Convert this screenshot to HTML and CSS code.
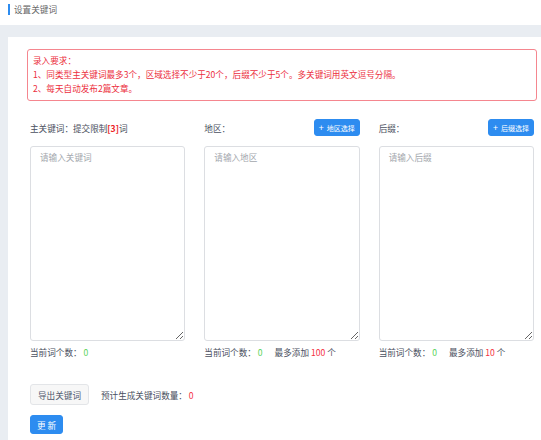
FILE: index.html
```html
<!DOCTYPE html>
<html lang="zh-CN">
<head>
    <meta charset="UTF-8">
    <meta name="viewport" content="width=device-width, initial-scale=1.0">
    <title>设置关键词</title>
    <link rel="stylesheet" href="styles.css">
</head>
<body>
    <div class="page-header">
        <span class="page-title">设置关键词</span>
    </div>

    <div class="card">
        <div class="notice">
            <p>录入要求：</p>
            <p>1、同类型主关键词最多3个，区域选择不少于20个，后缀不少于5个。多关键词用英文逗号分隔。</p>
            <p>2、每天自动发布2篇文章。</p>
        </div>

        <div class="form">
            <div class="columns">
                <div class="col">
                    <div class="col-head">
                        <span class="label">主关键词：提交限制<b class="limit">[3]</b>词</span>
                    </div>
                    <textarea class="input" placeholder="请输入关键词"></textarea>
                    <div class="count">当前词个数： <span class="ok">0</span></div>
                </div>

                <div class="col">
                    <div class="col-head">
                        <span class="label">地区：</span>
                        <button class="btn btn-primary btn-small"><span class="plus">+</span>地区选择</button>
                    </div>
                    <textarea class="input" placeholder="请输入地区"></textarea>
                    <div class="count">当前词个数： <span class="ok">0</span><span class="max">最多添加 <span class="bad">100</span> 个</span></div>
                </div>

                <div class="col">
                    <div class="col-head">
                        <span class="label">后缀：</span>
                        <button class="btn btn-primary btn-small"><span class="plus">+</span>后缀选择</button>
                    </div>
                    <textarea class="input" placeholder="请输入后缀"></textarea>
                    <div class="count">当前词个数： <span class="ok">0</span><span class="max">最多添加 <span class="bad">10</span> 个</span></div>
                </div>
            </div>

            <div class="export-row">
                <button class="btn btn-default">导出关键词</button>
                <span class="estimate">预计生成关键词数量： <span class="bad">0</span></span>
            </div>

            <button class="btn btn-primary btn-update">更 新</button>
        </div>
    </div>
</body>
</html>
```

FILE: styles.css
```css
body {
    margin: 0;
    background: #e9edf2;
    font-family: "Noto Sans CJK SC", "Liberation Sans", sans-serif;
    font-size: 8.6px;
    color: #4a5060;
    height: 440px;
    overflow: hidden;
}

.page-header {
    background: white;
    height: 25px;
    padding: 3px 0 0 8px;
    box-sizing: border-box;
}

.page-title {
    display: inline-block;
    border-left: 2px solid #2d8cf0;
    padding-left: 4px;
    line-height: 11px;
    color: #666;
}

.card {
    background: white;
    margin: 12px 0 0 8px;
    padding: 12px 4px 6px 19px;
}

.notice {
    border: 1.5px solid #f5868f;
    border-radius: 3px;
    padding: 3px 5px 5px;
    color: #ec2f40;
}

.notice p {
    margin: 0;
    line-height: 14px;
}

.form {
    padding: 0 3px;
}

.columns {
    display: grid;
    grid-template-columns: repeat(3, 1fr);
    column-gap: 19px;
    margin-top: 18px;
}

.col-head {
    display: flex;
    justify-content: space-between;
    align-items: center;
    height: 17px;
    margin-bottom: 10px;
}

.limit {
    color: #ed1c24;
}

.input {
    display: block;
    width: 100%;
    height: 195px;
    box-sizing: border-box;
    border: 1px solid #dcdee2;
    border-radius: 3px;
    padding: 4px 9px;
    font-family: inherit;
    font-size: 8.6px;
    line-height: 12px;
    color: #515a6e;
    resize: vertical;
}

.input::placeholder {
    color: #a3a7ad;
}

.count {
    margin-top: 5px;
    line-height: 12px;
}

.ok {
    color: #5ad35a;
}

.bad {
    color: #f5313f;
}

.max {
    margin-left: 12px;
}

.btn {
    font-family: inherit;
    border-radius: 3px;
    cursor: pointer;
}

.btn-primary {
    background: #2d8cf0;
    border: 1px solid #2d8cf0;
    color: white;
}

.btn-small {
    height: 17px;
    padding: 0 4px;
    font-size: 7px;
    line-height: 15px;
}

.plus {
    font-size: 9px;
    margin-right: 3px;
}

.export-row {
    display: flex;
    align-items: center;
    margin-top: 26px;
}

.btn-default {
    background: #f7f7f7;
    border: 1px solid #e3e5e8;
    color: #515a6e;
    height: 21px;
    padding: 0 7px;
    font-size: 8.6px;
}

.estimate {
    margin-left: 12px;
}

.btn-update {
    display: block;
    margin-top: 10px;
    height: 19px;
    padding: 0 6px;
    font-size: 8.6px;
}
```
